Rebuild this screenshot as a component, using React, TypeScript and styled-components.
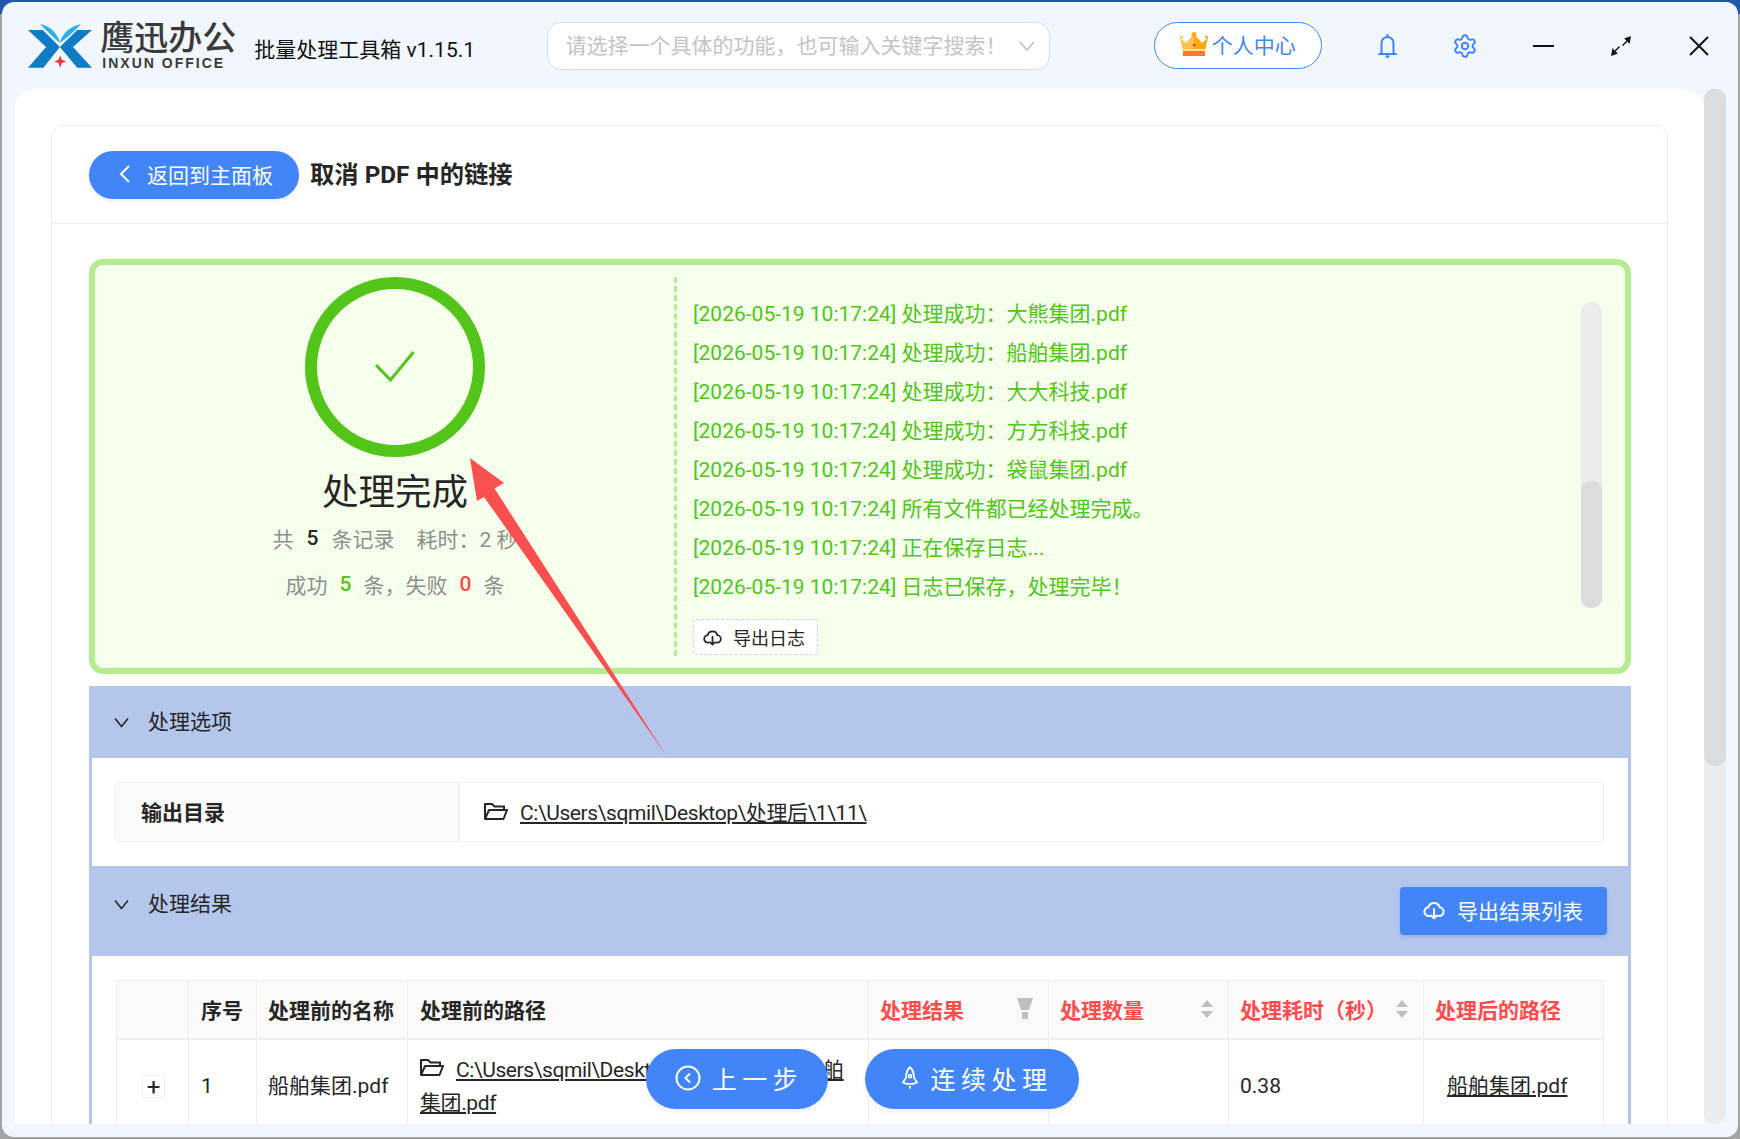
import styled, {createGlobalStyle} from 'styled-components';
import {Settings} from 'lucide-react';

const BLUE = '#4285f9';
const GREEN = '#52c41a';
const LIGHT_GREEN = '#b7eb8f';
const BAND = '#b5c6ed';
const RED = '#ff4d4f';
const LINE = '#efefef';

const GlobalStyle = createGlobalStyle`
  html, body {
    margin: 0;
    padding: 0;
    overflow: hidden;
  }
  body, button, input, table {
    font-family: Roboto, "Noto Sans CJK SC", sans-serif;
    color: #262626;
  }
  * {
    box-sizing: border-box;
  }
`;

const logLines = [
  '处理成功：大熊集团.pdf',
  '处理成功：船舶集团.pdf',
  '处理成功：大大科技.pdf',
  '处理成功：方方科技.pdf',
  '处理成功：袋鼠集团.pdf',
  '所有文件都已经处理完成。',
  '正在保存日志...',
  '日志已保存，处理完毕！',
];

const CloudIcon = ({size = 20}: {size?: number}) => (
  <svg width={size} height={size} viewBox="0 0 24 24" fill="none" stroke="currentColor" strokeWidth="2.2" strokeLinecap="round" strokeLinejoin="round">
    <path d="M7.5 18.5H6.5a4.7 4.7 0 0 1-.6-9.4 6.3 6.3 0 0 1 12.2 0 4.7 4.7 0 0 1-.6 9.4h-1" />
    <path d="M12 11v10M9 18l3 3 3-3" />
  </svg>
);

const FolderIcon = () => (
  <svg width="24" height="17" viewBox="0 0 24 17" fill="none" stroke="#262626" strokeWidth="2">
    <path d="M1 16V1h7l2.5 2.5H20V7" />
    <path d="M1 16h18.5L23 7H5z" strokeLinejoin="round" />
  </svg>
);

const Chevron = () => (
  <svg width="15" height="11" viewBox="0 0 15 11" fill="none" stroke="#262626" strokeWidth="1.6">
    <path d="M1 1.5l6.5 8 6.5-8" />
  </svg>
);

const SortIcon = () => (
  <svg width="12" height="18" viewBox="0 0 12 18" fill="#bfbfbf">
    <path d="M6 0l6 7H0zM0 11h12l-6 7z" />
  </svg>
);

const FilterIcon = () => (
  <svg width="16" height="21" viewBox="0 0 16 21" fill="#bfbfbf">
    <path d="M0 0h16l-4 12H4z" />
    <rect x="5" y="14" width="6" height="7" />
  </svg>
);

const Logo = () => (
  <svg width="65" height="46" viewBox="85 62 196 138">
    <path fill="#0d7cc4" d="M85 82h45l52 52-50 63H85l55-63z" />
    <path fill="#0d7cc4" d="M280 82h-45l-53 52 53 63h45l-58-63z" />
    <path fill="#2bb0e8" d="M122 64c28 6 52 24 60 58-16-14-34-30-60-58z" />
    <path fill="#2bb0e8" d="M246 64c-28 6-56 24-64 58 18-14 40-30 64-58z" />
    <path fill="#e8363c" d="M183 160l5 13 13 5-13 5-5 14-5-14-13-5 13-5z" />
  </svg>
);

const Crown = () => (
  <svg width="28" height="24" viewBox="0 0 28 24">
    <path fill="#ffc24d" d="M0 6l6 5 8-9v17H3z" />
    <path fill="#ffa90f" d="M28 6l-6 5-8-9v17h11z" />
    <circle cx="14" cy="2.5" r="2.5" fill="#ffa90f" />
    <circle cx="1.5" cy="5" r="1.5" fill="#ffc24d" />
    <circle cx="26.5" cy="5" r="1.5" fill="#ffa90f" />
    <rect x="3" y="17" width="22" height="2" fill="#ffe0a0" />
    <rect x="3" y="19" width="22" height="5" fill="#ff7a2d" />
    <circle cx="14" cy="13" r="1.2" fill="#d9363e" />
  </svg>
);

const Bell = () => (
  <svg width="19" height="24" viewBox="0 0 19 24" fill="none" stroke={BLUE} strokeWidth="2">
    <path d="M3.5 19.5V9a6 6 0 0 1 12 0v10.5" />
    <path d="M1 20h17" strokeLinecap="round" />
    <path d="M9.5 0v3M8 21.5l1.5 2 1.5-2" />
  </svg>
);

const ExpandIcon = () => (
  <svg width="20" height="20" viewBox="0 0 20 20">
    <path d="M20 0l-1.5 8-2-2.5L12 10l-1-1 4.5-4.5L13 2.5z" fill="#111" />
    <path d="M0 20l1.5-8 2 2.5L8 10l1 1-4.500 4.500 2.500 2z" fill="#111" />
  </svg>
);

const CloseIcon = () => (
  <svg width="20" height="20" viewBox="0 0 20 20" fill="none" stroke="#111" strokeWidth="2">
    <path d="M1 1l18 18M19 1L1 19" />
  </svg>
);

const LeftCircle = () => (
  <svg width="26" height="26" viewBox="0 0 26 26" fill="none" stroke="#fff" strokeWidth="2">
    <circle cx="13" cy="13" r="11.5" />
    <path d="M15 8.500L10.500 13l4.500 4.500" />
  </svg>
);

const Rocket = () => (
  <svg width="18" height="26" viewBox="0 0 20 26" fill="none" stroke="#fff" strokeWidth="2" strokeLinejoin="round">
    <path d="M10 1c3.500 3 4.500 7 4.500 12l3.500 5-4.500 1.500h-7L2 18l3.500-5C5.500 8 6.500 4 10 1z" />
    <circle cx="10" cy="11" r="1.600" />
    <path d="M10 21.500V25" />
  </svg>
);

const App = () => {
  return (
    <Desktop>
      <GlobalStyle />
      <Window>
        <TopBar>
          <Logo />
          <Brand>
            <BrandName>鹰迅办公</BrandName>
            <BrandSub>INXUN OFFICE</BrandSub>
          </Brand>
          <Version>批量处理工具箱 v1.15.1</Version>
          <Search>
            <SearchText>请选择一个具体的功能，也可输入关键字搜索！</SearchText>
            <svg width="16" height="10" viewBox="0 0 16 10" fill="none" stroke="#bdbdbd" strokeWidth="1.500">
              <path d="M1 1l7 8 7-8" />
            </svg>
          </Search>
          <UserButton>
            <Crown />
            个人中心
          </UserButton>
          <BarIcons>
            <BarIcon>
              <Bell />
            </BarIcon>
            <BarIcon>
              <Settings size={26} color={BLUE} strokeWidth={1.8} />
            </BarIcon>
            <BarIcon>
              <MinimizeMark />
            </BarIcon>
            <BarIcon>
              <ExpandIcon />
            </BarIcon>
            <BarIcon>
              <CloseIcon />
            </BarIcon>
          </BarIcons>
        </TopBar>

        <Body>
          <Card>
            <Panel>
              <PanelHeader>
                <BackButton>
                  <svg width="14" height="20" viewBox="0 0 14 20" fill="none" stroke="#fff" strokeWidth="2">
                    <path d="M11 2L3 10l8 8" />
                  </svg>
                  返回到主面板
                </BackButton>
                <PageTitle>取消 PDF 中的链接</PageTitle>
              </PanelHeader>

              <PanelBody>
                <ResultBox>
                  <Summary>
                    <Ring>
                      <svg width="40" height="31" viewBox="0 0 40 31" fill="none" stroke={GREEN} strokeWidth="3">
                        <path d="M1 14l14.500 15L38.500 1" />
                      </svg>
                    </Ring>
                    <DoneTitle>处理完成</DoneTitle>
                    <StatLine $height={47}>
                      共<Num>5</Num>条记录<Gap />耗时：2 秒
                    </StatLine>
                    <StatLine $height={46}>
                      成功<Num $color={GREEN} $gap={12}>5</Num>条，失败<Num $color={RED} $gap={12}>0</Num>条
                    </StatLine>
                  </Summary>
                  <LogColumn>
                    <LogScroll>
                      <LogList>
                        {logLines.map((line, i) => (
                          <LogLine key={i}>[2026-05-19 10:17:24] {line}</LogLine>
                        ))}
                      </LogList>
                      <LogTrack>
                        <LogThumb />
                      </LogTrack>
                    </LogScroll>
                    <ExportLog>
                      <CloudIcon size={19} />
                      导出日志
                    </ExportLog>
                  </LogColumn>
                </ResultBox>

                <SectionHead>
                  <SectionLead>
                    <Chevron />
                    <SectionTitle>处理选项</SectionTitle>
                  </SectionLead>
                </SectionHead>
                <OptionsBody>
                  <OptionRow>
                    <OptionLabel>输出目录</OptionLabel>
                    <OptionValue>
                      <FolderIcon />
                      <PathLink>C:\Users\sqmil\Desktop\处理后\1\11\</PathLink>
                    </OptionValue>
                  </OptionRow>
                </OptionsBody>

                <SectionHead $tall>
                  <SectionLead>
                    <Chevron />
                    <SectionTitle>处理结果</SectionTitle>
                  </SectionLead>
                  <ExportButton>
                    <CloudIcon size={22} />
                    导出结果列表
                  </ExportButton>
                </SectionHead>
                <ResultsBody>
                  <Table>
                    <colgroup>
                      <col width={72} />
                      <col width={68} />
                      <col width={151} />
                      <col width={461} />
                      <col width={180} />
                      <col width={180} />
                      <col width={195} />
                      <col width={181} />
                    </colgroup>
                    <thead>
                      <tr>
                        <Th />
                        <Th>序号</Th>
                        <Th>处理前的名称</Th>
                        <Th>处理前的路径</Th>
                        <Th $red>
                          <HeadInner>
                            处理结果
                            <FilterIcon />
                          </HeadInner>
                        </Th>
                        <Th $red>
                          <HeadInner>
                            处理数量
                            <SortIcon />
                          </HeadInner>
                        </Th>
                        <Th $red>
                          <HeadInner>
                            处理耗时（秒）
                            <SortIcon />
                          </HeadInner>
                        </Th>
                        <Th $red>处理后的路径</Th>
                      </tr>
                    </thead>
                    <tbody>
                      <tr>
                        <Td>
                          <ExpandBox>+</ExpandBox>
                        </Td>
                        <Td>1</Td>
                        <Td>船舶集团.pdf</Td>
                        <Td>
                          <InlineFolder>
                            <FolderIcon />
                          </InlineFolder>
                          <PathLink>C:\Users\sqmil\Desktop\处理前\1\11\船舶集团.pdf</PathLink>
                        </Td>
                        <Td />
                        <Td />
                        <Td>0.38</Td>
                        <OutputCell>
                          <OutputLink>船舶集团.pdf</OutputLink>
                        </OutputCell>
                      </tr>
                    </tbody>
                  </Table>
                </ResultsBody>
              </PanelBody>
            </Panel>
          </Card>
          <PageTrack>
            <PageThumb />
          </PageTrack>
        </Body>

        <FloatBar>
          <FloatButton $width={182} $pad={4}>
            <LeftCircle />
            上一步
          </FloatButton>
          <FloatButton $width={214} $pad={10}>
            <Rocket />
            连续处理
          </FloatButton>
        </FloatBar>
      </Window>

      <Arrow width="205" height="305" viewBox="465 455 205 305">
        <path fill="#fb5050" d="M470 458l34 25-9.500 5.500L666 755 484 497l-7 4z" />
      </Arrow>
    </Desktop>
  );
};

export default App;

const Desktop = styled.div`
  position: relative;
  width: 1740px;
  height: 1139px;
  padding: 2px;
  overflow: hidden;
  background: linear-gradient(to bottom, #1f5aa8 0, #1f5aa8 14px, #a3a3a3 14px);
`;

const Window = styled.div`
  position: relative;
  display: flex;
  flex-direction: column;
  height: 1135px;
  border-radius: 12px;
  background: #f2f7ff;
  overflow: hidden;
`;

const TopBar = styled.div`
  display: flex;
  flex: none;
  align-items: center;
  height: 87px;
  padding-left: 26px;
`;

const Brand = styled.div`
  display: flex;
  flex-direction: column;
  width: 136px;
  margin-left: 8px;
  color: #3a3a3a;
`;

const BrandName = styled.div`
  height: 34px;
  font-size: 34px;
  font-weight: 500;
  line-height: 34px;
  white-space: nowrap;
`;

const BrandSub = styled.div`
  margin-top: 1px;
  margin-left: 2px;
  font-family: "Liberation Sans", sans-serif;
  font-size: 14px;
  font-weight: 700;
  letter-spacing: 2px;
  line-height: 14px;
  white-space: nowrap;
`;

const Version = styled.div`
  width: 296px;
  margin-top: 4px;
  margin-left: 18px;
  color: #111;
  font-size: 21px;
  white-space: nowrap;
`;

const Search = styled.div`
  display: flex;
  align-items: center;
  justify-content: space-between;
  width: 507px;
  height: 48px;
  padding: 0 14px 0 17px;
  border: 1px solid #dcdcdc;
  border-radius: 14px;
  background: #fff;
  color: #c4c4c4;
  font-size: 21px;
  white-space: nowrap;
`;

const SearchText = styled.span`
  margin-top: -3px;
`;

const UserButton = styled.button`
  display: flex;
  align-items: center;
  justify-content: center;
  gap: 4px;
  width: 170px;
  height: 47px;
  margin-left: 104px;
  padding: 0 0 3px;
  border: 1px solid ${BLUE};
  border-radius: 24px;
  background: #fff;
  color: ${BLUE};
  font-size: 21px;
`;

const BarIcons = styled.div`
  display: flex;
  margin-left: 26px;
`;

const BarIcon = styled.div`
  display: flex;
  align-items: center;
  justify-content: center;
  width: 78px;
  height: 40px;
`;

const MinimizeMark = styled.div`
  width: 21px;
  height: 2px;
  background: #111;
`;

const Body = styled.div`
  display: flex;
  flex: 1;
  min-height: 0;
  padding: 0 12px 13px 13px;
`;

const Card = styled.div`
  flex: 1;
  min-width: 0;
  padding: 36px 36px 0;
  border-radius: 20px 20px 0 0;
  background: #fff;
  overflow: hidden;
`;

const PageTrack = styled.div`
  flex: none;
  width: 22px;
  border-radius: 10px;
  background: #ececec;
`;

const PageThumb = styled.div`
  height: 677px;
  border-radius: 10px;
  background: #dcdcdc;
`;

const Panel = styled.div`
  border: 1px solid ${LINE};
  border-radius: 12px 12px 0 0;
`;

const PanelHeader = styled.div`
  display: flex;
  align-items: center;
  gap: 11px;
  height: 98px;
  padding-left: 37px;
  border-bottom: 1px solid ${LINE};
`;

const BackButton = styled.button`
  display: flex;
  align-items: center;
  gap: 15px;
  width: 210px;
  height: 48px;
  padding: 0 0 2px 29px;
  border: none;
  border-radius: 24px;
  background: ${BLUE};
  box-shadow: 0 2px 4px rgba(0, 0, 0, 0.08);
  color: #fff;
  font-size: 21px;
  white-space: nowrap;
`;

const PageTitle = styled.h1`
  margin: 0;
  font-size: 24.3px;
  font-weight: 700;
  line-height: 34px;
`;

const PanelBody = styled.div`
  padding: 35px 36px 0 37px;
`;

const ResultBox = styled.div`
  display: flex;
  height: 415px;
  margin-bottom: 12px;
  padding: 12px 23px 12px 26px;
  border: 6px solid ${LIGHT_GREEN};
  border-radius: 14px;
  background: #f5ffec;
`;

const Summary = styled.div`
  display: flex;
  flex: none;
  flex-direction: column;
  align-items: center;
  width: 553px;
  padding-right: 5px;
`;

const Ring = styled.div`
  display: flex;
  flex: none;
  align-items: center;
  justify-content: center;
  width: 180px;
  height: 180px;
  padding-bottom: 2px;
  border: 12px solid ${GREEN};
  border-radius: 50%;
`;

const DoneTitle = styled.div`
  height: 42px;
  margin-top: 15px;
  font-size: 36.5px;
  line-height: 42px;
`;

const StatLine = styled.div<{$height: number}>`
  display: flex;
  align-items: center;
  height: ${(props) => props.$height}px;
  color: #8f8f8f;
  font-size: 21px;
  white-space: nowrap;
`;

const Num = styled.span<{$color?: string; $gap?: number}>`
  margin: 0 ${(props) => props.$gap || 13}px;
  color: ${(props) => props.$color || '#262626'};
  font-weight: 500;
`;

const Gap = styled.span`
  width: 22px;
`;

const LogColumn = styled.div`
  display: flex;
  flex: 1;
  flex-direction: column;
  min-width: 0;
  padding-left: 16px;
  border-left: 3px dashed ${LIGHT_GREEN};
`;

const LogScroll = styled.div`
  display: flex;
  padding-top: 18px;
`;

const LogList = styled.div`
  flex: 1;
`;

const LogLine = styled.div`
  height: 39px;
  color: ${GREEN};
  font-size: 21px;
  line-height: 39px;
  white-space: nowrap;
`;

const LogTrack = styled.div`
  flex: none;
  width: 21px;
  height: 306px;
  margin-top: 7px;
  padding-top: 179px;
  border-radius: 10px;
  background: #ececec;
`;

const LogThumb = styled.div`
  height: 127px;
  border-radius: 10px;
  background: #dcdcdc;
`;

const ExportLog = styled.button`
  display: flex;
  align-items: center;
  gap: 11px;
  width: 125px;
  height: 36px;
  margin-top: 11px;
  padding: 0 0 0 9px;
  border: 1px dashed #d4d4d4;
  border-radius: 3px;
  background: #fff;
  color: #262626;
  font-size: 18px;
  white-space: nowrap;
`;

const SectionHead = styled.div<{$tall?: boolean}>`
  display: flex;
  align-items: ${(props) => (props.$tall ? 'flex-start' : 'center')};
  height: ${(props) => (props.$tall ? '90px' : '72px')};
  padding: ${(props) => (props.$tall ? '21px 24px 0 25px' : '0 24px 0 25px')};
  background: ${BAND};
`;

const SectionLead = styled.div`
  display: flex;
  align-items: center;
  gap: 19px;
  height: 34px;
`;

const SectionTitle = styled.div`
  font-size: 21px;
  line-height: 34px;
`;

const ExportButton = styled.button`
  display: flex;
  align-items: center;
  gap: 12px;
  width: 207px;
  height: 48px;
  margin-left: auto;
  padding: 0 0 2px 23px;
  border: none;
  border-radius: 4px;
  background: ${BLUE};
  box-shadow: 0 2px 4px rgba(0, 0, 0, 0.12);
  color: #fff;
  font-size: 21px;
  white-space: nowrap;
`;

const OptionsBody = styled.div`
  padding: 24px 24px 24px 23px;
  border-right: 3px solid ${BAND};
  border-left: 3px solid ${BAND};
  background: #fff;
`;

const OptionRow = styled.div`
  display: flex;
  height: 60px;
  border: 1px solid ${LINE};
  border-radius: 3px;
`;

const OptionLabel = styled.div`
  display: flex;
  align-items: center;
  width: 344px;
  padding: 0 0 2px 25px;
  border-right: 2px solid ${LINE};
  background: #fafafa;
  font-size: 21px;
  font-weight: 700;
`;

const OptionValue = styled.div`
  display: flex;
  align-items: center;
  gap: 12px;
  padding: 0 0 2px 24px;
`;

const PathLink = styled.a`
  color: #262626;
  font-size: 21px;
  letter-spacing: -0.4px;
  text-decoration: underline;
`;

const OutputLink = styled(PathLink)`
  letter-spacing: 0;
`;

const ResultsBody = styled.div`
  padding: 24px 22px 0;
  border-right: 3px solid ${BAND};
  border-left: 3px solid ${BAND};
  background: #fff;
`;

const Table = styled.table`
  width: 1488px;
  margin-left: 2px;
  border-collapse: separate;
  border-spacing: 0;
  border-top: 1px solid ${LINE};
  table-layout: fixed;
`;

const Th = styled.th<{$red?: boolean}>`
  height: 59px;
  padding: 0 11px 2px;
  border-bottom: 2px solid ${LINE};
  border-left: 1px solid ${LINE};
  background: #fafafa;
  color: ${(props) => (props.$red ? RED : '#262626')};
  font-size: 21px;
  font-weight: 700;
  text-align: left;
  white-space: nowrap;
  &:nth-child(2),
  &:nth-child(4) {
    padding-left: 12px;
  }
  &:last-child {
    border-right: 1px solid ${LINE};
  }
`;

const HeadInner = styled.div`
  display: flex;
  align-items: center;
  justify-content: space-between;
  margin-right: 4px;
`;

const Td = styled.td`
  height: 92px;
  padding: 13px 11px;
  border-left: 1px solid ${LINE};
  font-size: 21px;
  line-height: 33px;
  vertical-align: middle;
  &:nth-child(2),
  &:nth-child(4) {
    padding-left: 12px;
  }
`;

const OutputCell = styled(Td)`
  padding-left: 23px;
  border-right: 1px solid ${LINE};
`;

const ExpandBox = styled.div`
  display: flex;
  align-items: center;
  justify-content: center;
  width: 23px;
  height: 23px;
  margin-left: 14px;
  border: 1px solid ${LINE};
  border-radius: 2px;
  font-size: 24px;
  line-height: 22px;
`;

const InlineFolder = styled.span`
  margin-right: 12px;
  vertical-align: 1px;
`;

const FloatBar = styled.div`
  position: absolute;
  top: 1047px;
  left: 644px;
  display: flex;
  gap: 37px;
`;

const FloatButton = styled.button<{$width: number; $pad: number}>`
  display: flex;
  align-items: center;
  justify-content: center;
  gap: 11px;
  width: ${(props) => props.$width}px;
  height: 60px;
  padding: 0 0 2px ${(props) => props.$pad}px;
  border: none;
  border-radius: 30px;
  background: ${BLUE};
  box-shadow: 0 3px 6px rgba(0, 0, 0, 0.06);
  color: #fff;
  font-size: 25px;
  letter-spacing: 5.5px;
  white-space: nowrap;
`;

const Arrow = styled.svg`
  position: absolute;
  top: 455px;
  left: 465px;
  pointer-events: none;
`;
